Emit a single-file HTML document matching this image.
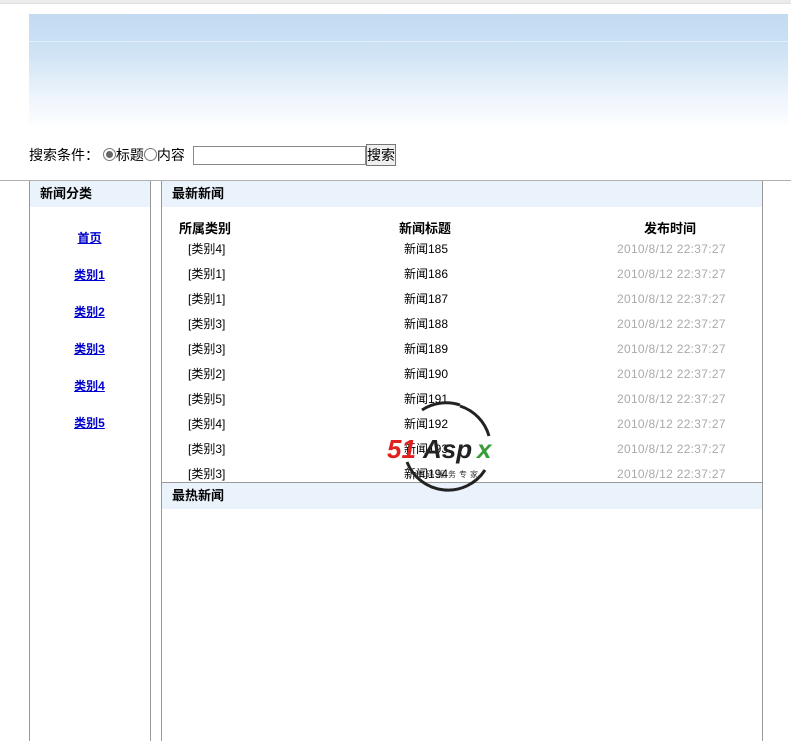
<!DOCTYPE html>
<html><head><meta charset="utf-8"><style>
body{margin:0;width:791px;height:727px;position:relative;overflow:hidden;background:#fff;font-family:"Liberation Sans","Noto Sans CJK SC","WenQuanYi Zen Hei",sans-serif;font-size:13px;color:#000}
.a{position:absolute}
.hd{background:#eaf2fb;font-weight:bold;font-size:13px;line-height:26px}
.r{position:absolute;font-size:12px;line-height:14px}
.lk{position:absolute;left:29px;width:121px;text-align:center;font-size:12px;font-weight:bold;color:#0000cc;text-decoration:underline}
.t{color:#aaa;letter-spacing:0.3px}
</style></head><body>
<div class="a" style="left:0;top:0;width:791px;height:3px;background:#ececec;border-bottom:1px solid #e0e0e0"></div>
<div class="a" style="left:29px;top:14px;width:759px;height:112px;background:linear-gradient(#c3dbf2 0%,#c8dff4 20%,#cfe3f5 35%,#dfecf8 55%,#eef5fc 75%,#fdfeff 100%)"></div>
<div class="a" style="left:29px;top:41px;width:759px;height:1px;background:#e2eef9"></div>
<div class="a" style="left:29px;top:146px;font-size:14px;line-height:18px;white-space:nowrap">搜索条件：&nbsp;<span style="display:inline-block;width:11px;height:11px;border:1px solid #777;border-radius:50%;vertical-align:-1px;position:relative;background:#fff"><span style="position:absolute;left:2px;top:2px;width:7px;height:7px;border-radius:50%;background:#666"></span></span>标题<span style="display:inline-block;width:11px;height:11px;border:1px solid #777;border-radius:50%;vertical-align:-1px;background:#fff"></span>内容</div>
<div class="a" style="left:193px;top:146px;width:171px;height:17px;border:1px solid #888;background:#fff"></div>
<div class="a" style="left:366px;top:144px;width:28px;height:20px;border:1px solid #777;background:#efefef;font-size:14px;line-height:20px;text-align:center">搜索</div>
<div class="a" style="left:0;top:180px;width:791px;height:1px;background:#b0b0b0"></div>
<div class="a" style="left:29px;top:181px;width:120px;height:560px;border-left:1px solid #999;border-right:1px solid #999"></div>
<div class="a hd" style="left:30px;top:181px;width:120px;padding-left:10px;box-sizing:border-box">新闻分类</div>
<div class="lk" style="top:229px">首页</div>
<div class="lk" style="top:266px">类别1</div>
<div class="lk" style="top:303px">类别2</div>
<div class="lk" style="top:340px">类别3</div>
<div class="lk" style="top:377px">类别4</div>
<div class="lk" style="top:414px">类别5</div>
<div class="a" style="left:161px;top:181px;width:600px;height:560px;border-left:1px solid #999;border-right:1px solid #999"></div>
<div class="a hd" style="left:162px;top:181px;width:600px;padding-left:10px;box-sizing:border-box">最新新闻</div>
<div class="a" style="left:179px;top:218px;font-weight:bold;font-size:13px">所属类别</div>
<div class="a" style="left:399px;top:218px;font-weight:bold;font-size:13px">新闻标题</div>
<div class="a" style="left:644px;top:218px;font-weight:bold;font-size:13px">发布时间</div>
<div id="rows"></div>
<div class="a" style="left:162px;top:482px;width:600px;height:1px;background:#999"></div>
<div class="a hd" style="left:162px;top:483px;width:600px;padding-left:10px;box-sizing:border-box">最热新闻</div>
<script>
var c=[4,1,1,3,3,2,5,4,3,3],h='';
for(var i=0;i<10;i++){var y=242+i*25;
h+='<div class="r" style="left:188px;top:'+y+'px">[类别'+c[i]+']</div><div class="r" style="left:404px;top:'+y+'px">新闻'+(185+i)+'</div><div class="r t" style="left:617px;top:'+y+'px">2010/8/12 22:37:27</div>';}
document.getElementById('rows').innerHTML=h;
</script>
<svg class="a" style="left:385px;top:400px" width="130" height="95" viewBox="0 0 130 95">
<path d="M75 6 A44 44 0 0 1 104 36" fill="none" stroke="#222" stroke-width="3"/>
<path d="M37 10 A44 44 0 0 1 75 5" fill="none" stroke="#222" stroke-width="3"/>
<path d="M22 62 A44 44 0 0 0 100 70" fill="none" stroke="#222" stroke-width="3"/>
<text x="2" y="58" font-family="Liberation Sans,sans-serif" font-size="26" font-weight="bold" font-style="italic" fill="#e0201e">51</text>
<text x="38" y="58" font-family="Liberation Sans,sans-serif" font-size="26" font-weight="bold" font-style="italic" fill="#222">Asp</text>
<text x="92" y="58" font-family="Liberation Sans,sans-serif" font-size="26" font-weight="bold" font-style="italic" fill="#3a9d3a">x</text>
<text x="30" y="77" font-family="Noto Sans CJK SC,sans-serif" font-size="8" fill="#333" letter-spacing="3">源码服务专家</text>
</svg>
</body></html>
